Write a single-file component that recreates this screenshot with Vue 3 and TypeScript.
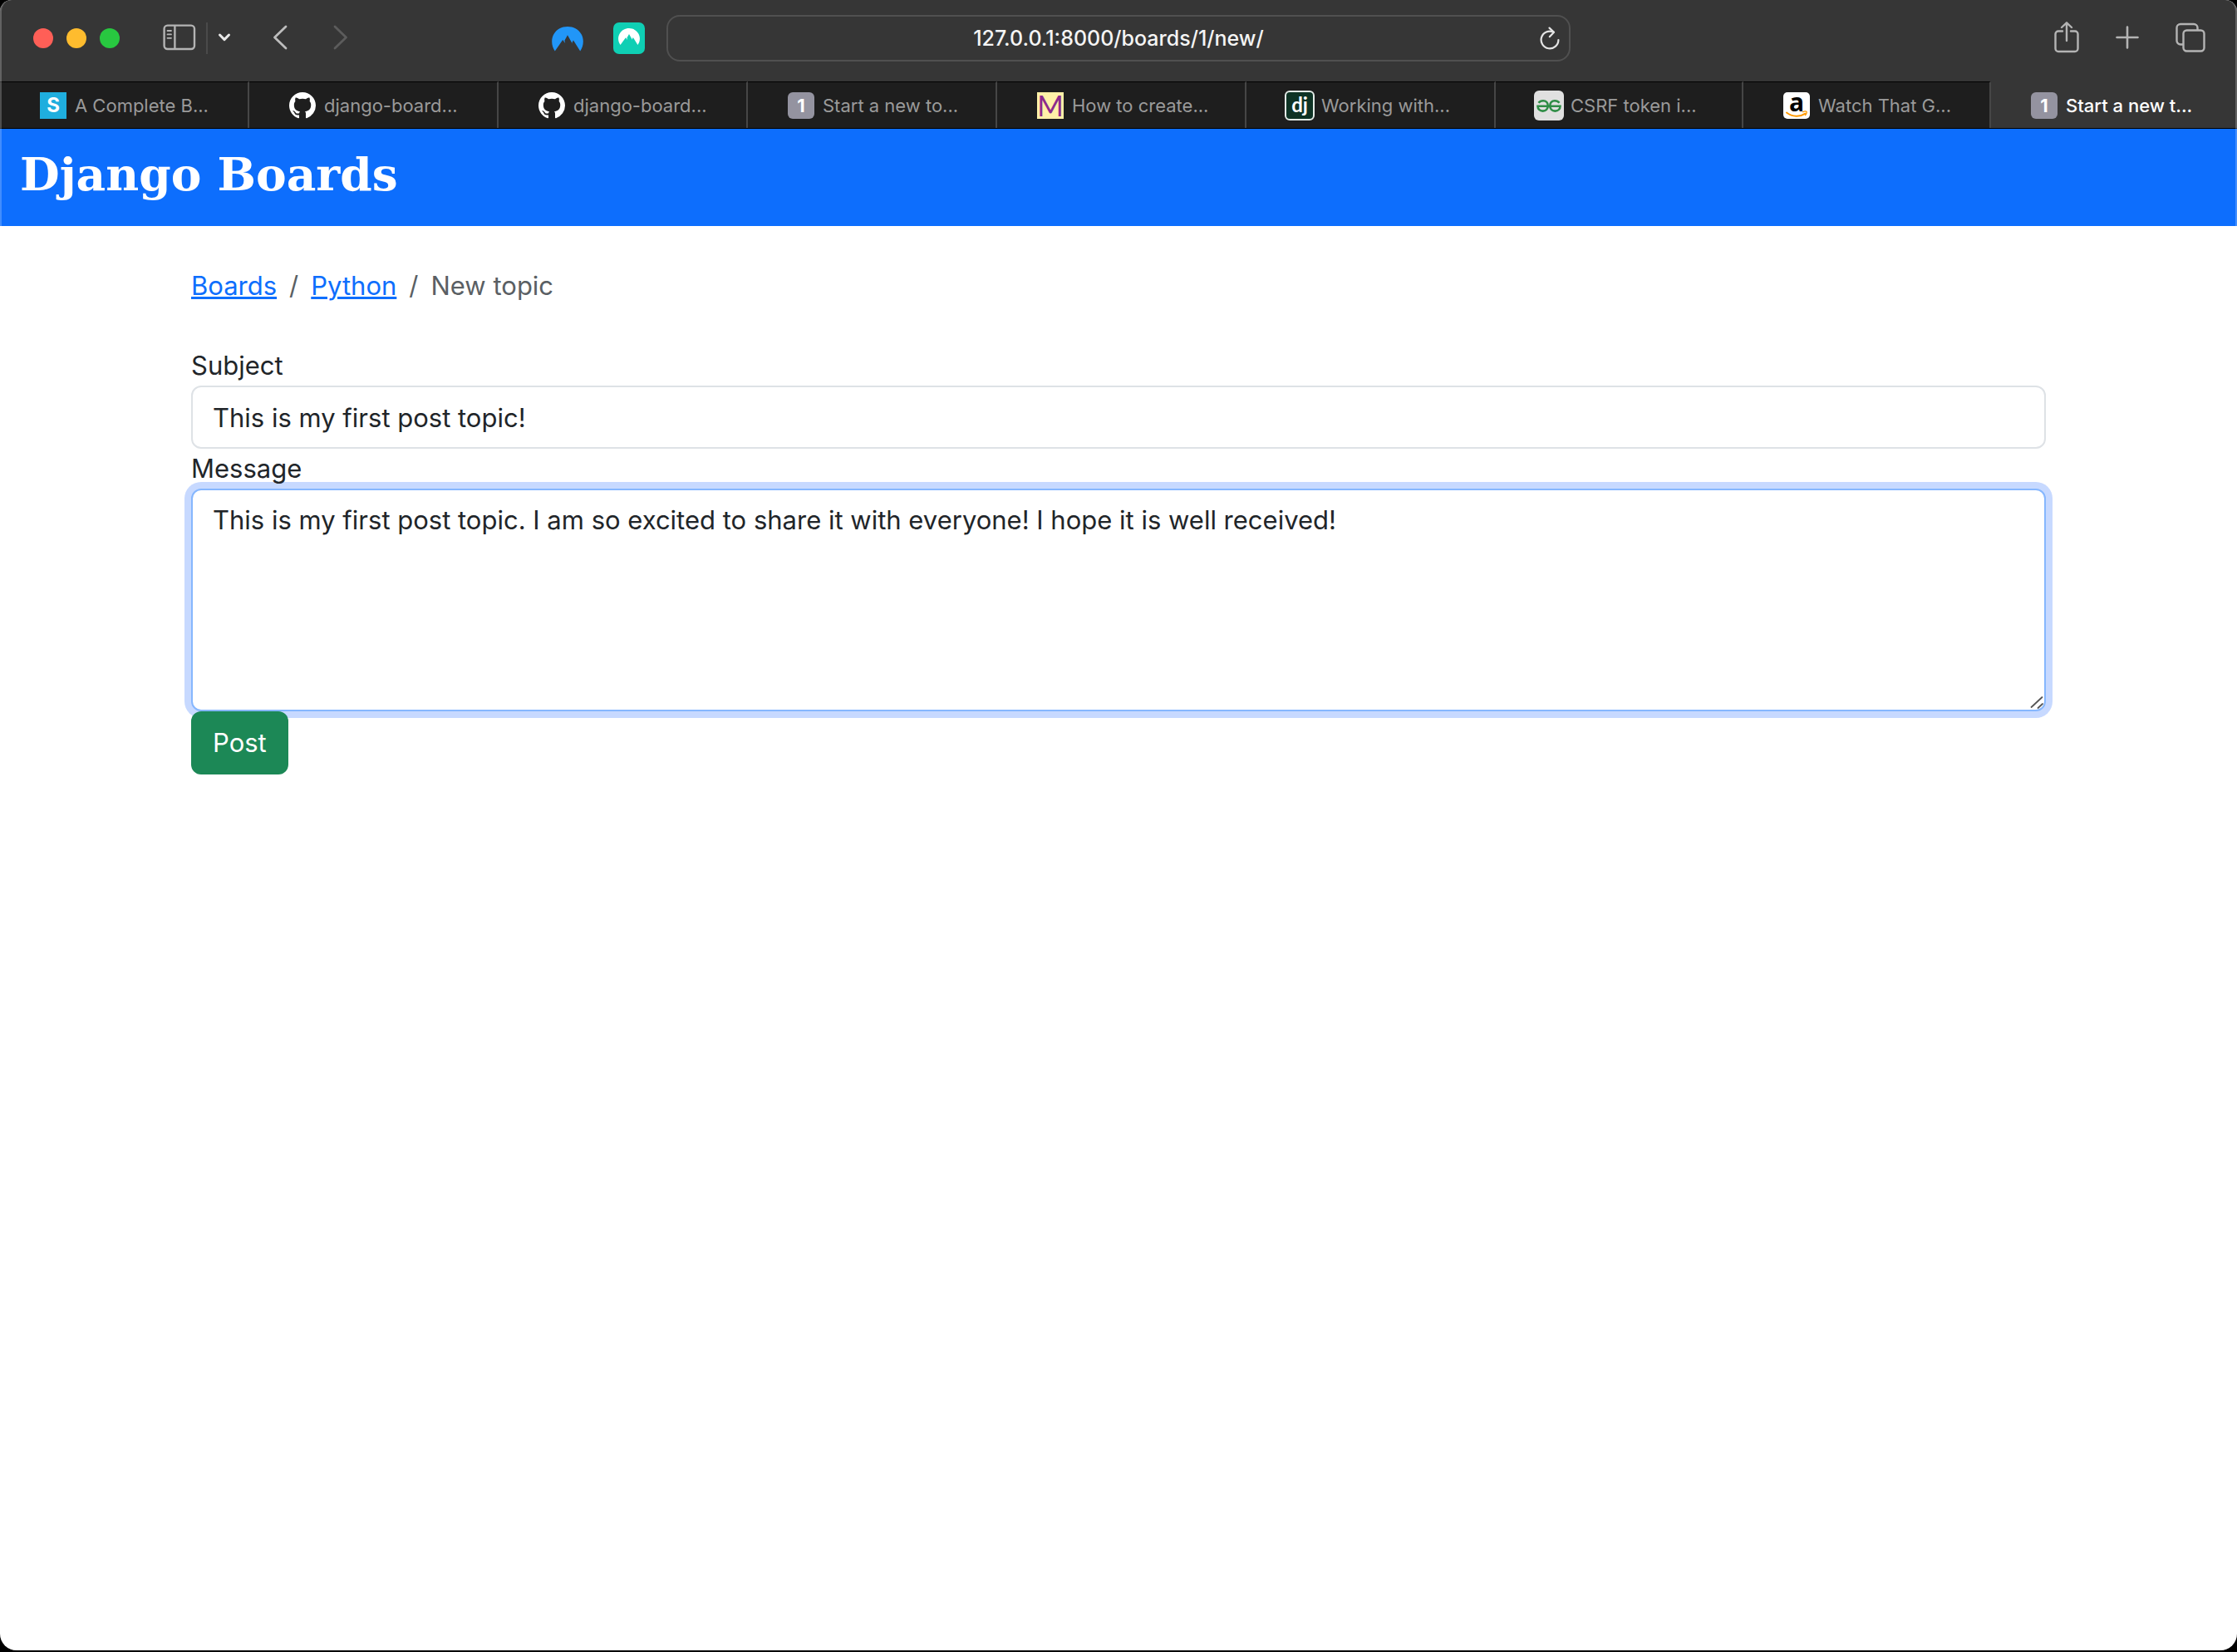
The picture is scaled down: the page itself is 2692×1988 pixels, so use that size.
<script setup lang="ts">
import { ref } from 'vue'

type Favicon = 'sibt' | 'github' | 'one' | 'm' | 'django' | 'geeks' | 'amazon'

interface BrowserTab {
  icon: Favicon
  title: string
  active?: boolean
}

const tabs: BrowserTab[] = [
  { icon: 'sibt', title: 'A Complete B...' },
  { icon: 'github', title: 'django-board...' },
  { icon: 'github', title: 'django-board...' },
  { icon: 'one', title: 'Start a new to...' },
  { icon: 'm', title: 'How to create...' },
  { icon: 'django', title: 'Working with...' },
  { icon: 'geeks', title: 'CSRF token i...' },
  { icon: 'amazon', title: 'Watch That G...' },
  { icon: 'one', title: 'Start a new t...', active: true },
]

const address = ref('127.0.0.1:8000/boards/1/new/')
const subject = ref('This is my first post topic!')
const message = ref(
  'This is my first post topic. I am so excited to share it with everyone! I hope it is well received!',
)
</script>

<template>
  <div class="desktop">
    <div class="window">
      <header class="toolbar">
        <div class="tools left">
          <div class="lights">
            <button class="light red" type="button" aria-label="Close"></button>
            <button class="light amber" type="button" aria-label="Minimise"></button>
            <button class="light green" type="button" aria-label="Zoom"></button>
          </div>
          <button class="tool sidebar" type="button" aria-label="Show sidebar">
            <svg width="40" height="32" viewBox="0 0 40 32" fill="none" stroke="#b4b4b4" stroke-width="2.4">
              <rect x="1.6" y="1.6" width="36.4" height="28.4" rx="4" />
              <path d="M14.4 1.6v28" />
              <path d="M5.5 8h4.5M5.5 12.4h4.5M5.5 16.8h4.5" stroke-width="1.8" stroke-linecap="round" />
            </svg>
          </button>
          <span class="rule"></span>
          <button class="tool menu" type="button" aria-label="Tab groups">
            <svg width="16" height="12" viewBox="0 0 16 12" fill="none" stroke="#e8e8e8" stroke-width="3" stroke-linecap="round" stroke-linejoin="round">
              <path d="M2.5 3 8 8.6 13.5 3" />
            </svg>
          </button>
          <button class="tool back" type="button" aria-label="Back">
            <svg width="20" height="32" viewBox="0 0 20 32" fill="none" stroke="#bdbdbd" stroke-width="2.8" stroke-linecap="round" stroke-linejoin="round">
              <path d="M16 3 2.5 16 16 29" />
            </svg>
          </button>
          <button class="tool forward" type="button" aria-label="Forward">
            <svg width="20" height="32" viewBox="0 0 20 32" fill="none" stroke="#5c5c5c" stroke-width="2.8" stroke-linecap="round" stroke-linejoin="round">
              <path d="M3 3 16.5 16 3 29" />
            </svg>
          </button>
          <div class="extensions">
            <button class="tool" type="button" aria-label="VPN">
              <svg width="38" height="38" viewBox="0 0 38 38">
                <path fill="#2196f8" d="M3.8 34.5C-.5 28.5-1 20 2.5 14 6 8 12 5 19 5s13 3 16.5 9c3.5 6 3 14.5-1.3 20.5L26 21.5l-1.600 2.800.6 1.700L19 15.200l-3.600 6.600.8 3.200-3-4z" />
              </svg>
            </button>
            <button class="tool" type="button" aria-label="Password manager">
              <svg width="38" height="38" viewBox="0 0 38 38">
                <rect width="38" height="38" rx="7" fill="#0fcfb4" />
                <path fill="#fff" d="M8.600 27C5.600 23 5.200 17.500 7.700 13.400 10.200 9.300 14.200 7 19 7s8.800 2.300 11.300 6.400c2.500 4.100 2.100 9.600-.9 13.600L23.800 18l-1 2 .2 1L19 14l-2.500 4.600.5 2.400-2-2.800z" />
              </svg>
            </button>
          </div>
        </div>

        <div class="address">
          <input v-model="address" type="text" aria-label="Address" spellcheck="false" />
          <button class="reload" type="button" aria-label="Reload">
            <svg width="24" height="28" viewBox="0 0 24 28" fill="none" stroke="#e4e4e4" stroke-width="2.2" stroke-linecap="round" stroke-linejoin="round">
              <path d="M22.4 16A10.4 10.4 0 1 1 16.5 6.6" />
              <path d="M11.5 1.6 17 6.8 11.8 12.2" />
            </svg>
          </button>
        </div>

        <div class="tools right">
          <button class="tool" type="button" aria-label="Share">
            <svg width="30" height="38" viewBox="0 0 30 38" fill="none" stroke="#b4b4b4" stroke-width="2.4" stroke-linecap="round" stroke-linejoin="round">
              <path d="M10 11.500H5A3.500 3.500 0 0 0 1.500 15V32.500A3.500 3.500 0 0 0 5 36h20a3.500 3.500 0 0 0 3.500-3.500V15a3.500 3.500 0 0 0-3.500-3.500h-5" />
              <path d="M15 23V1.500M9 7 15 1.300 21 7" />
            </svg>
          </button>
          <button class="tool" type="button" aria-label="New tab">
            <svg width="28" height="38" viewBox="0 0 28 38" fill="none" stroke="#b4b4b4" stroke-width="2.6" stroke-linecap="round">
              <path d="M14 6.500v25M1.500 19h25" />
            </svg>
          </button>
          <button class="tool" type="button" aria-label="Show all tabs">
            <svg width="36" height="38" viewBox="0 0 36 38" fill="none" stroke="#b4b4b4" stroke-width="2.4">
              <rect x="9.500" y="10.500" width="25" height="25" rx="4" />
              <path d="M9.500 27.500H6A4.500 4.500 0 0 1 1.500 23V7.500A4.500 4.500 0 0 1 6 3h16a4.500 4.500 0 0 1 4.500 4.500v3" />
            </svg>
          </button>
        </div>
      </header>

      <nav class="tabs" aria-label="Open tabs">
        <button v-for="(tab, i) in tabs" :key="i" type="button" class="tab" :class="{ active: tab.active }">
          <span class="favicon">
            <svg v-if="tab.icon === 'github'" width="32" height="32" viewBox="0 0 16 16" fill="#fff">
              <path d="M8 0C3.580 0 0 3.580 0 8c0 3.540 2.290 6.530 5.470 7.590.4.070.55-.17.55-.38 0-.19-.01-.82-.01-1.490-2.010.37-2.530-.49-2.690-.94-.09-.23-.48-.94-.82-1.130-.28-.15-.68-.52-.01-.53.63-.01 1.080.58 1.230.82.72 1.210 1.870.87 2.330.66.07-.52.28-.87.51-1.070-1.780-.2-3.640-.89-3.640-3.950 0-.87.31-1.590.82-2.150-.08-.2-.36-1.020.08-2.120 0 0 .67-.21 2.200.82.64-.18 1.320-.27 2-.27s1.360.09 2 .27c1.530-1.040 2.200-.82 2.200-.82.44 1.100.16 1.920.08 2.120.51.56.82 1.270.82 2.150 0 3.070-1.870 3.750-3.650 3.950.29.25.54.73.54 1.480 0 1.070-.01 1.930-.01 2.200 0 .21.15.46.55.38A8.010 8.010 0 0 0 16 8c0-4.420-3.580-8-8-8z" />
            </svg>
            <svg v-else-if="tab.icon === 'geeks'" width="36" height="36" viewBox="0 0 36 36" fill="none" stroke="#2f8d46" stroke-width="2.6">
              <rect width="36" height="36" rx="6" fill="#e0e0e0" stroke="none" />
              <path d="M5.500 14.800C7 12.800 9 12.200 11 12.200c3.500 0 5.800 2.600 5.800 6 0 4-2.600 6.400-6.200 6.400S4.500 22 4.500 18.800h27c0 3.200-2.500 5.800-6.100 5.800s-6.200-2.400-6.200-6.400c0-3.400 2.300-6 5.800-6 2 0 4 .6 5.500 2.600" />
            </svg>
            <span v-else-if="tab.icon === 'sibt'" class="badge sibt">S</span>
            <span v-else-if="tab.icon === 'one'" class="badge one">1</span>
            <span v-else-if="tab.icon === 'm'" class="badge em">M</span>
            <span v-else-if="tab.icon === 'django'" class="badge django">dj</span>
            <span v-else class="badge amazon">
              a
              <svg class="smile" width="32" height="32" viewBox="0 0 32 32" fill="none" stroke="#f90" stroke-linecap="round">
                <path d="M4 24.500c7 5.300 16 5.600 22.600 1.200" stroke-width="2" />
                <path d="M23.500 23.600c2-.7 4-.7 4.500-.2s0 2.600-1.500 4.200" stroke-width="1.400" />
              </svg>
            </span>
          </span>
          <span class="tab-title">{{ tab.title }}</span>
        </button>
      </nav>

      <div class="navbar">
        <a class="brand" href="#">Django Boards</a>
      </div>

      <main class="container">
        <nav aria-label="Breadcrumb">
          <ol class="breadcrumb">
            <li><a href="#">Boards</a></li>
            <li><a href="#">Python</a></li>
            <li class="current" aria-current="page">New topic</li>
          </ol>
        </nav>

        <form class="topic-form" @submit.prevent>
          <label for="subject">Subject</label>
          <input id="subject" v-model="subject" class="control" type="text" />
          <label for="message">Message</label>
          <div class="message">
            <textarea id="message" v-model="message" class="control focused" rows="5" spellcheck="false"></textarea>
            <svg class="grip" width="18" height="18" viewBox="0 0 18 18" fill="none" stroke="#555" stroke-width="1.8" stroke-linecap="round" aria-hidden="true">
              <path d="M2.500 15 15.500 3M10.500 16 16 11" />
            </svg>
          </div>
          <button class="submit" type="submit">Post</button>
        </form>
      </main>
    </div>
  </div>
</template>

<style>
body {
  margin: 0;
  background: #000;
}
</style>

<style scoped>
* {
  box-sizing: border-box;
}

.desktop {
  display: flex;
  min-height: 100vh;
  padding-bottom: 2px;
  background: #000;
  font-family: Inter, 'Liberation Sans', sans-serif;
}

.window {
  position: relative;
  flex: 1;
  overflow: hidden;
  border-radius: 14px 14px 20px 20px;
  background: #fff;
}

.window::after {
  content: '';
  position: absolute;
  inset: 0;
  border: 2px solid rgba(255, 255, 255, 0.22);
  border-top: 0;
  border-radius: inherit;
  pointer-events: none;
}

button {
  margin: 0;
  padding: 0;
  border: 0;
  background: none;
  font-family: inherit;
}

svg {
  display: block;
}

.toolbar {
  display: grid;
  grid-template-columns: 1fr minmax(400px, 1088px) 1fr;
  align-items: center;
  height: 98px;
  padding-bottom: 6px;
  background: #363636;
}

.tools {
  display: flex;
  align-items: center;
}

.tool {
  padding-bottom: 2px;
}

.extensions .tool {
  padding-bottom: 0;
}

.left {
  padding-left: 40px;
}

.lights {
  display: flex;
  gap: 16px;
}

.light {
  width: 24px;
  height: 24px;
  border-radius: 50%;
}

.red {
  background: #ff5f57;
}

.amber {
  background: #febc2e;
}

.green {
  background: #28c840;
}

.sidebar {
  margin-left: 52px;
}

.rule {
  width: 2px;
  height: 38px;
  margin-left: 12px;
  background: #4a4a4a;
}

.menu {
  margin-left: 12px;
}

.back {
  margin-left: 50px;
}

.forward {
  margin-left: 52px;
}

.extensions {
  display: flex;
  gap: 36px;
  margin-left: auto;
  margin-right: 26px;
}

.address {
  position: relative;
}

.address input {
  display: block;
  width: 100%;
  height: 56px;
  padding: 0 56px;
  border: 2px solid #505050;
  border-radius: 16px;
  outline: 0;
  background: #363636;
  color: #f4f4f4;
  font: 500 25px Inter, 'Liberation Sans', sans-serif;
  text-align: center;
}

.reload {
  position: absolute;
  top: 14px;
  right: 13px;
}

.right {
  justify-content: flex-end;
  gap: 44px;
  padding-right: 38px;
}

.tabs {
  display: grid;
  grid-template-columns: repeat(6, 300fr) 298fr 298fr 296fr;
  height: 57px;
  border-bottom: 1px solid #000;
  background: #363636;
}

.tab {
  display: flex;
  align-items: center;
  gap: 8px;
  min-width: 0;
  padding: 0 0 0 46px;
  border-top: 1px solid #000;
  border-right: 2px solid #464646;
  background: #1e1e1e;
  color: #9a9a9a;
  font-size: 22px;
  line-height: 28px;
  white-space: nowrap;
}

.tab.active {
  border-color: transparent;
  background: #363636;
  color: #fff;
  font-weight: 500;
}

.favicon {
  display: flex;
  flex: none;
  align-items: center;
  justify-content: center;
  width: 36px;
}

.tab-title {
  overflow: hidden;
}

.badge {
  width: 32px;
  height: 32px;
  color: #fff;
  font-size: 24px;
  font-weight: 700;
  line-height: 32px;
  text-align: center;
}

.sibt {
  background: #1faede;
}

.one {
  border-radius: 6px;
  background: #9493a0;
  font-size: 22px;
}

.em {
  background: #fff0a8;
  color: #8c2a8c;
  font-family: Lato, sans-serif;
  font-size: 34px;
  font-weight: 400;
}

.django {
  width: 36px;
  height: 36px;
  border: 2px solid #e4ece8;
  border-radius: 6px;
  background: #0e3325;
  font-family: Lato, sans-serif;
  line-height: 30px;
}

.amazon {
  position: relative;
  border-radius: 5px;
  background: #fff;
  color: #000;
  font-family: 'Open Sans', sans-serif;
  font-size: 30px;
  line-height: 24px;
}

.smile {
  position: absolute;
  inset: 0;
}

.navbar {
  display: flex;
  align-items: center;
  height: 117px;
  padding: 0 24px 8px;
  background: #0d6efd;
}

.brand {
  color: #fff;
  font: 700 55px 'DejaVu Serif', serif;
  line-height: 60px;
  text-decoration: none;
}

.container {
  max-width: 2280px;
  margin: 0 auto;
  padding: 48px 24px;
  color: #212529;
  font-size: 31px;
  line-height: 48px;
}

.breadcrumb {
  display: flex;
  margin: 0 0 48px;
  padding: 0;
  list-style: none;
}

.breadcrumb li + li::before {
  content: '/';
  padding: 0 15px;
  color: #5a5f64;
}

.breadcrumb a {
  color: #0d6efd;
  text-decoration: underline;
}

.current {
  color: #5a5f64;
}

.topic-form label {
  display: block;
  width: fit-content;
}

.message {
  position: relative;
}

.control {
  display: block;
  width: 100%;
  padding: 12px 24px;
  border: 2px solid #dee2e6;
  border-radius: 12px;
  outline: 0;
  background: #fff;
  color: #212529;
  font: inherit;
  line-height: 48px;
}

input.control {
  height: 76px;
}

textarea.control {
  height: 268px;
  resize: none;
}

.focused {
  border-color: #86b7fe;
  box-shadow: 0 0 0 8px #c7d9ff;
}

.topic-form label {
  position: relative;
  z-index: 1;
}

.grip {
  position: absolute;
  right: 2px;
  bottom: 2px;
  pointer-events: none;
}

.submit {
  position: relative;
  display: block;
  padding: 14px 26px;
  border-radius: 12px;
  background: #1c8856;
  color: #fff;
  font-size: 31px;
  line-height: 48px;
}
</style>
